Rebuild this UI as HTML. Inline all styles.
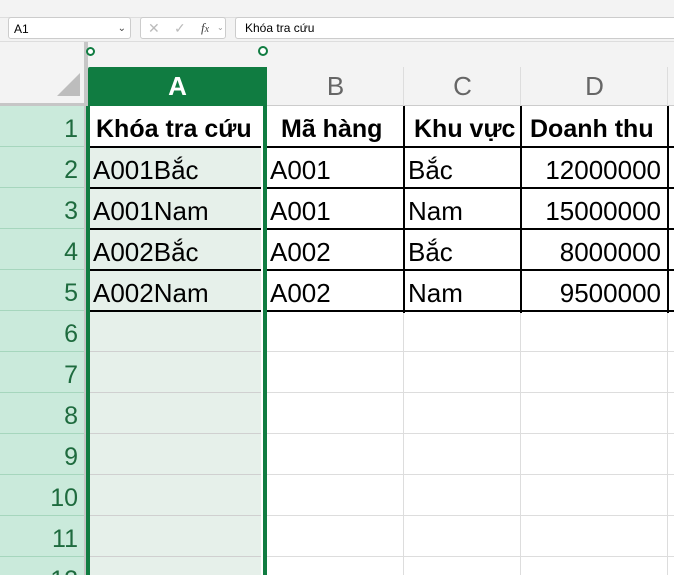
<!DOCTYPE html>
<html style="overflow:hidden"><head><style>
html,body{overflow:hidden}
body{margin:0;width:674px;height:575px;overflow:hidden;background:#fff;font-family:"Liberation Sans",Calibri,sans-serif;position:relative}
.a{position:absolute}
.cell{position:absolute;font-size:26px;color:#000;line-height:41px;white-space:nowrap;margin-top:3px}
.b{font-weight:bold;font-size:25px}
.rn{position:absolute;left:0;width:78px;text-align:right;font-size:25px;color:#1e6b3e;line-height:41px;margin-top:3px}
.ch{position:absolute;top:67px;height:39px;line-height:39px;text-align:center;font-size:26px;color:#666}
</style></head><body>
<div class="a" style="left:0;top:0;width:674px;height:106px;background:#f3f3f3"></div>
<div class="a" style="left:0;top:17px;width:674px;height:1px;background:#ddd"></div>
<div class="a" style="left:0;top:41px;width:674px;height:1px;background:#ddd"></div>
<div class="a" style="left:8px;top:17px;width:123px;height:22px;background:#fff;border:1px solid #ccc;border-radius:3px;font-size:12px;line-height:22px;padding-left:5px;box-sizing:border-box">A1<span style="position:absolute;right:4px;top:0;font-size:10px;color:#444">&#8964;</span></div>
<div class="a" style="left:140px;top:17px;width:86px;height:22px;background:#fff;border:1px solid #ccc;border-radius:3px;box-sizing:border-box;font-size:14px;color:#bbb;line-height:20px">
<span style="position:absolute;left:7px">✕</span><span style="position:absolute;left:33px">✓</span><span style="position:absolute;left:60px;color:#444;font-style:italic;font-family:'Liberation Serif',serif;font-size:13px">f<span style="font-size:10px">x</span></span><span style="position:absolute;left:76px;font-size:8px;color:#999">&#8964;</span></div>
<div class="a" style="left:235px;top:17px;width:445px;height:22px;background:#fff;border:1px solid #ccc;border-radius:3px;box-sizing:border-box;font-size:12px;line-height:21px;padding-left:9px">Khóa tra cứu</div>
<div class="a" style="left:0;top:42px;width:84px;height:61px;background:#f3f3f3"></div>
<div class="a" style="left:84px;top:42px;width:4px;height:64px;background:#c6c6c6"></div>
<div class="a" style="left:0;top:103px;width:88px;height:3px;background:#c6c6c6"></div>
<div class="a" style="left:57px;top:73px;width:0;height:0;border-left:23px solid transparent;border-bottom:23px solid #bdbdbd"></div>
<div class="a" style="left:88px;top:67px;width:179px;height:39px;background:#107c41;border-radius:2px 2px 0 0"></div>
<div class="ch" style="left:88px;width:179px;color:#fff;font-weight:bold">A</div>
<div class="ch" style="left:267px;width:137px">B</div>
<div class="ch" style="left:404px;width:117px">C</div>
<div class="ch" style="left:521px;width:147px">D</div>
<div class="a" style="left:267px;top:105px;width:407px;height:1px;background:#ccc"></div>
<div class="a" style="left:403px;top:67px;width:1px;height:39px;background:#ddd"></div>
<div class="a" style="left:520px;top:67px;width:1px;height:39px;background:#ddd"></div>
<div class="a" style="left:667px;top:67px;width:1px;height:39px;background:#ddd"></div>
<div class="a" style="left:86px;top:47px;width:5px;height:5px;border:2px solid #107c41;border-radius:50%;background:#fff"></div>
<div class="a" style="left:258px;top:46px;width:6px;height:6px;border:2px solid #107c41;border-radius:50%;background:#fff"></div>
<div class="a" style="left:0;top:106px;width:84px;height:469px;background:#caeadb"></div>
<div class="a" style="left:84px;top:106px;width:4px;height:469px;background:#c6c6c6"></div>
<div class="a" style="left:90px;top:147px;width:171px;height:428px;background:#e6f0ea"></div>
<div class="a" style="left:90px;top:106px;width:171px;height:41px;background:#fff"></div>
<div id="grid"></div>
<script>
var h='';
for(var i=0;i<12;i++){var y=106+i*41;
h+='<div class="rn" style="top:'+y+'px">'+(i+1)+'</div>';
h+='<div class="a" style="left:0;top:'+(y+40)+'px;width:84px;height:1px;background:#a6d6bd"></div>';
if(i>=4){h+='<div class="a" style="left:90px;top:'+(y+40)+'px;width:171px;height:1px;background:#d0d0d0"></div>';
h+='<div class="a" style="left:266px;top:'+(y+40)+'px;width:408px;height:1px;background:#ddd"></div>';}}
[404,521,668].forEach(function(x){h+='<div class="a" style="left:'+(x-1)+'px;top:312px;width:1px;height:263px;background:#ddd"></div>';});
for(var i=0;i<5;i++){var y=146+i*41;
h+='<div class="a" style="left:90px;top:'+y+'px;width:171px;height:2px;background:#000"></div>';
h+='<div class="a" style="left:267px;top:'+y+'px;width:407px;height:2px;background:#000"></div>';}
[403,520,667].forEach(function(x){h+='<div class="a" style="left:'+x+'px;top:106px;width:2px;height:207px;background:#000"></div>';});
document.getElementById('grid').innerHTML=h;
</script>
<div class="a" style="left:263px;top:67px;width:4px;height:508px;background:#107c41"></div>
<div class="a" style="left:86px;top:106px;width:4px;height:469px;background:#107c41"></div>
<div class="cell b" style="left:96px;top:106px">Khóa tra cứu</div>
<div class="cell b" style="left:281px;top:106px">Mã hàng</div>
<div class="cell b" style="left:414px;top:106px">Khu vực</div>
<div class="cell b" style="left:530px;top:106px">Doanh thu</div>
<div class="cell" style="left:93px;top:147px">A001Bắc</div>
<div class="cell" style="left:93px;top:188px">A001Nam</div>
<div class="cell" style="left:93px;top:229px">A002Bắc</div>
<div class="cell" style="left:93px;top:270px">A002Nam</div>
<div class="cell" style="left:270px;top:147px">A001</div>
<div class="cell" style="left:270px;top:188px">A001</div>
<div class="cell" style="left:270px;top:229px">A002</div>
<div class="cell" style="left:270px;top:270px">A002</div>
<div class="cell" style="left:408px;top:147px">Bắc</div>
<div class="cell" style="left:408px;top:188px">Nam</div>
<div class="cell" style="left:408px;top:229px">Bắc</div>
<div class="cell" style="left:408px;top:270px">Nam</div>
<div class="cell" style="right:13px;top:147px">12000000</div>
<div class="cell" style="right:13px;top:188px">15000000</div>
<div class="cell" style="right:13px;top:229px">8000000</div>
<div class="cell" style="right:13px;top:270px">9500000</div>
</body></html>
